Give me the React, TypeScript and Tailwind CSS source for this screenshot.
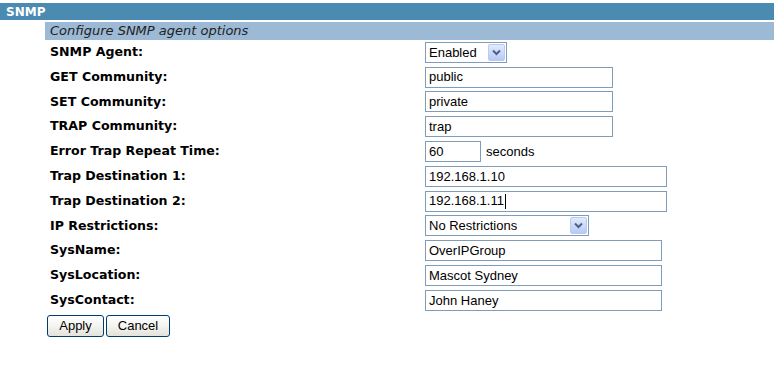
import React from 'react';

const label = "text-[12.6px] font-bold text-black";
const inputBox = "h-[21px] border border-[#7f9db9] bg-white px-[3px] flex items-center text-[13px] text-black font-['Liberation_Sans',Arial,sans-serif]";

function Arrow() {
  return (
    <div className="ml-auto mr-[1px] w-[17px] h-[17px] rounded-[2px] border border-[#b8cbf0] bg-gradient-to-b from-[#e1eafd] to-[#b7c9f5] flex items-center justify-center">
      <svg width="9" height="7" viewBox="0 0 9 7">
        <path d="M1 1.5 L4.5 5 L8 1.5" fill="none" stroke="#4d6185" strokeWidth="2" />
      </svg>
    </div>
  );
}

function Select({ value, width }: { value: string; width: string }) {
  return (
    <div className={`${inputBox} ${width} pr-0`}>
      <span>{value}</span>
      <Arrow />
    </div>
  );
}

function Field({ value, width, caret }: { value: string; width: string; caret?: boolean }) {
  return (
    <div className={`${inputBox} ${width}`}>
      <span>{value}</span>
      {caret && <span className="w-px h-[15px] bg-black ml-[1px]" />}
    </div>
  );
}

const rows: { name: string; control: React.ReactNode }[] = [
  { name: 'SNMP Agent:', control: <Select value="Enabled" width="w-[82px]" /> },
  { name: 'GET Community:', control: <Field value="public" width="w-[188px]" /> },
  { name: 'SET Community:', control: <Field value="private" width="w-[188px]" /> },
  { name: 'TRAP Community:', control: <Field value="trap" width="w-[188px]" /> },
  {
    name: 'Error Trap Repeat Time:',
    control: (
      <div className="flex items-center">
        <Field value="60" width="w-[56px]" />
        <span className="ml-[5px] text-[13px] font-['Liberation_Sans',Arial,sans-serif]">seconds</span>
      </div>
    ),
  },
  { name: 'Trap Destination 1:', control: <Field value="192.168.1.10" width="w-[242px]" /> },
  { name: 'Trap Destination 2:', control: <Field value="192.168.1.11" width="w-[242px]" caret /> },
  { name: 'IP Restrictions:', control: <Select value="No Restrictions" width="w-[164px]" /> },
  { name: 'SysName:', control: <Field value="OverIPGroup" width="w-[237px]" /> },
  { name: 'SysLocation:', control: <Field value="Mascot Sydney" width="w-[237px]" /> },
  { name: 'SysContact:', control: <Field value="John Haney" width="w-[237px]" /> },
];

function XpButton({ children, width }: { children: React.ReactNode; width: string }) {
  return (
    <button className={`${width} h-[22px] rounded-[3px] border border-[#003c74] bg-gradient-to-b from-white via-[#f4f4f0] to-[#e3e3db] text-[13px] text-black font-['Liberation_Sans',Arial,sans-serif] flex items-center justify-center`}>
      {children}
    </button>
  );
}

export default function App() {
  return (
    <div className="w-[774px] h-[375px] bg-white font-['DejaVu_Sans',Verdana,sans-serif] pt-[3px]">
      <div className="h-[17px] bg-[#4b8bb1] text-white text-[12px] font-bold pl-[6px] flex items-center">SNMP</div>
      <div className="ml-[45px] mt-[2px] h-[18px] bg-[#9cb9d5] pl-[5px] flex items-center text-[13px] italic text-[#222]">
        Configure SNMP agent options
      </div>
      <div className="ml-[50px]">
        {rows.map((r) => (
          <div key={r.name} className="h-[24.8px] flex items-center">
            <div className={`${label} w-[375px]`}>{r.name}</div>
            {r.control}
          </div>
        ))}
      </div>
      <div className="ml-[47px] mt-[2px] flex gap-[2px]">
        <XpButton width="w-[57px]">Apply</XpButton>
        <XpButton width="w-[64px]">Cancel</XpButton>
      </div>
    </div>
  );
}
